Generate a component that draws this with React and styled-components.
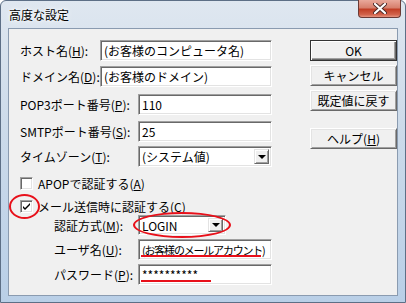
import React from 'react'
import styled, { createGlobalStyle } from 'styled-components'

const Global = createGlobalStyle`
  html, body { margin: 0; padding: 0; background: #fff; }
  body {
    font-family: "Noto Sans CJK JP", "Noto Sans", sans-serif;
  }
`

const Frame = styled.div`
  position: relative;
  width: 406px;
  height: 303px;
  box-sizing: border-box;
  display: flex;
  flex-direction: column;
  border: 1px solid #5d6f86;
  border-radius: 6px 6px 0 0;
  background: linear-gradient(180deg, #dfe7f0 0%, #cddbea 40%, #b9cfe7 100%);
  padding: 0 7px 6px 7px;
`

const TitleBar = styled.div`
  height: 27px;
  display: flex;
  align-items: flex-start;
  justify-content: space-between;
`

const Title = styled.div`
  font-size: 12px;
  line-height: 14px;
  color: #000;
  padding: 7px 0 0 1px;
  text-shadow: 0 0 6px #fff, 0 0 3px #fff;
`

const CloseBtn = styled.div`
  width: 43px;
  height: 18px;
  margin-top: -1px;
  margin-right: -3px;
  box-sizing: border-box;
  border: 1px solid #6b3a35;
  border-top: none;
  border-radius: 0 0 4px 4px;
  background: linear-gradient(180deg, #e9a99b 0%, #d7806d 45%, #c13f26 55%, #d1624a 85%, #e6937f 100%);
  display: flex;
  align-items: center;
  justify-content: center;
`

const Client = styled.div`
  flex: 1;
  position: relative;
  display: flex;
  background: #f0f0f0;
  border: 1px solid #8a9bb0;
  font-size: 12px;
  color: #000;
`

const Form = styled.div`
  width: 276px;
  padding-left: 11px;
  display: flex;
  flex-direction: column;
`

const Row = styled.div`
  display: flex;
  align-items: center;
  height: ${p => p.h || 21}px;
  margin-top: ${p => p.mt}px;
  padding-left: ${p => p.indent || 0}px;
`

const Label = styled.div`
  width: ${p => p.w}px;
  flex-shrink: 0;
  white-space: nowrap;
`

const Field = styled.div`
  position: relative;
  box-sizing: border-box;
  width: ${p => p.w}px;
  height: ${p => p.h || 21}px;
  background: #fff;
  border-top: 1px solid #a0a0a0;
  border-left: 1px solid #a0a0a0;
  border-bottom: 1px solid #fff;
  border-right: 1px solid #fff;
  box-shadow: inset 1px 1px 0 #696969, inset -1px -1px 0 #e3e3e3;
  padding: 0 2px 0 3px;
  display: flex;
  align-items: center;
  white-space: nowrap;
  overflow: hidden;
  font-size: ${p => p.fs || 12}px;
  letter-spacing: ${p => p.ls || 0}px;
`

const DropBtn = styled.div`
  position: absolute;
  right: 2px;
  top: 2px;
  bottom: 2px;
  width: 15px;
  box-sizing: border-box;
  background: #f0f0f0;
  border-top: 1px solid #e3e3e3;
  border-left: 1px solid #e3e3e3;
  border-bottom: 1px solid #696969;
  border-right: 1px solid #696969;
  box-shadow: inset 1px 1px 0 #fff, inset -1px -1px 0 #a0a0a0;
  display: flex;
  align-items: center;
  justify-content: center;
  &::after {
    content: '';
    border-left: 4px solid transparent;
    border-right: 4px solid transparent;
    border-top: 4px solid #000;
  }
`

const Ul = styled.span`
  text-decoration: underline;
  text-underline-offset: 1px;
`

const RedLine = styled.span`
  position: absolute;
  left: 2px;
  bottom: 2px;
  width: ${p => p.w}px;
  height: 2px;
  background: #e8101a;
`

const CheckRow = styled(Row)`
  gap: 5px;
`

const Box = styled.div`
  width: 13px;
  height: 13px;
  box-sizing: border-box;
  background: #fff;
  border-top: 1px solid #a0a0a0;
  border-left: 1px solid #a0a0a0;
  border-bottom: 1px solid #fff;
  border-right: 1px solid #fff;
  box-shadow: inset 1px 1px 0 #696969, inset -1px -1px 0 #e3e3e3;
  display: flex;
  align-items: center;
  justify-content: center;
`

const Circle = styled.div`
  position: absolute;
  left: ${p => p.x}px;
  top: ${p => p.y}px;
  width: ${p => p.w}px;
  height: ${p => p.h}px;
  border: 2px solid #e8101a;
  border-radius: 50%;
  box-sizing: border-box;
  pointer-events: none;
`

const Buttons = styled.div`
  display: flex;
  flex-direction: column;
  padding-left: 15px;
`

const Button = styled.div`
  box-sizing: border-box;
  width: 87px;
  height: 21px;
  margin-top: ${p => p.mt}px;
  background: #f0f0f0;
  border-top: 1px solid ${p => (p.primary ? '#333' : '#fff')};
  border-left: 1px solid ${p => (p.primary ? '#333' : '#fff')};
  border-bottom: 1px solid ${p => (p.primary ? '#333' : '#696969')};
  border-right: 1px solid ${p => (p.primary ? '#333' : '#696969')};
  box-shadow: ${p => (p.primary
    ? 'inset 1px 1px 0 #fff, inset -1px -1px 0 #696969, inset -2px -2px 0 #a0a0a0'
    : 'inset 1px 1px 0 #e3e3e3, inset -1px -1px 0 #a0a0a0')};
  display: flex;
  align-items: center;
  justify-content: center;
`

const Check = () => (
  <svg width="9" height="9" viewBox="0 0 9 9">
    <path d="M1 4 L3 6 L8 1 L8 3 L3 8 L1 6 Z" fill="#000" />
  </svg>
)

export default function App() {
  return (
    <>
      <Global />
      <Frame>
        <TitleBar>
          <Title>高度な設定</Title>
          <CloseBtn>
            <svg width="14" height="11" viewBox="0 0 14 11">
              <path d="M2 1 L12 10 M12 1 L2 10" stroke="#4a2a28" strokeWidth="4" strokeLinecap="round" />
              <path d="M2 1 L12 10 M12 1 L2 10" stroke="#fff" strokeWidth="2.2" strokeLinecap="round" />
            </svg>
          </CloseBtn>
        </TitleBar>
        <Client>
          <Form>
            <Row mt={11}>
              <Label w={80}>ホスト名(<Ul>H</Ul>):</Label>
              <Field w={172}>(お客様のコンピュータ名)</Field>
            </Row>
            <Row mt={5}>
              <Label w={80}>ドメイン名(<Ul>D</Ul>):</Label>
              <Field w={172}>(お客様のドメイン)</Field>
            </Row>
            <Row mt={7}>
              <Label w={118}>POP3ポート番号(<Ul>P</Ul>):</Label>
              <Field w={134}>110</Field>
            </Row>
            <Row mt={6}>
              <Label w={118}>SMTPポート番号(<Ul>S</Ul>):</Label>
              <Field w={134}>25</Field>
            </Row>
            <Row mt={4}>
              <Label w={118}>タイムゾーン(<Ul>T</Ul>):</Label>
              <Field w={134}>
                (システム値)
                <DropBtn />
              </Field>
            </Row>
            <CheckRow h={13} mt={10}>
              <Box />
              <Label>APOPで認証する(<Ul>A</Ul>)</Label>
            </CheckRow>
            <CheckRow h={13} mt={10}>
              <Box><Check /></Box>
              <Label>メール送信時に認証する(<Ul>C</Ul>)</Label>
            </CheckRow>
            <Row mt={2} h={20} indent={34}>
              <Label w={84}>認証方式(<Ul>M</Ul>):</Label>
              <Field w={88} h={20}>
                LOGIN
                <DropBtn />
              </Field>
            </Row>
            <Row mt={4} indent={34}>
              <Label w={84}>ユーザ名(<Ul>U</Ul>):</Label>
              <Field w={134} fs={11} ls={-1.2}>
                (お客様のメールアカウント)
                <RedLine w={120} />
              </Field>
            </Row>
            <Row mt={4} indent={34}>
              <Label w={84}>パスワード(<Ul>P</Ul>):</Label>
              <Field w={134}>
                **********
                <RedLine w={70} />
              </Field>
            </Row>
          </Form>
          <Buttons>
            <Button primary mt={11}>OK</Button>
            <Button mt={4}>キャンセル</Button>
            <Button mt={4}>既定値に戻す</Button>
            <Button mt={17}>ヘルプ(<Ul>H</Ul>)</Button>
          </Buttons>
          <Circle x={0} y={165} w={31} h={25} />
          <Circle x={124} y={183} w={98} h={26} />
        </Client>
      </Frame>
    </>
  )
}
